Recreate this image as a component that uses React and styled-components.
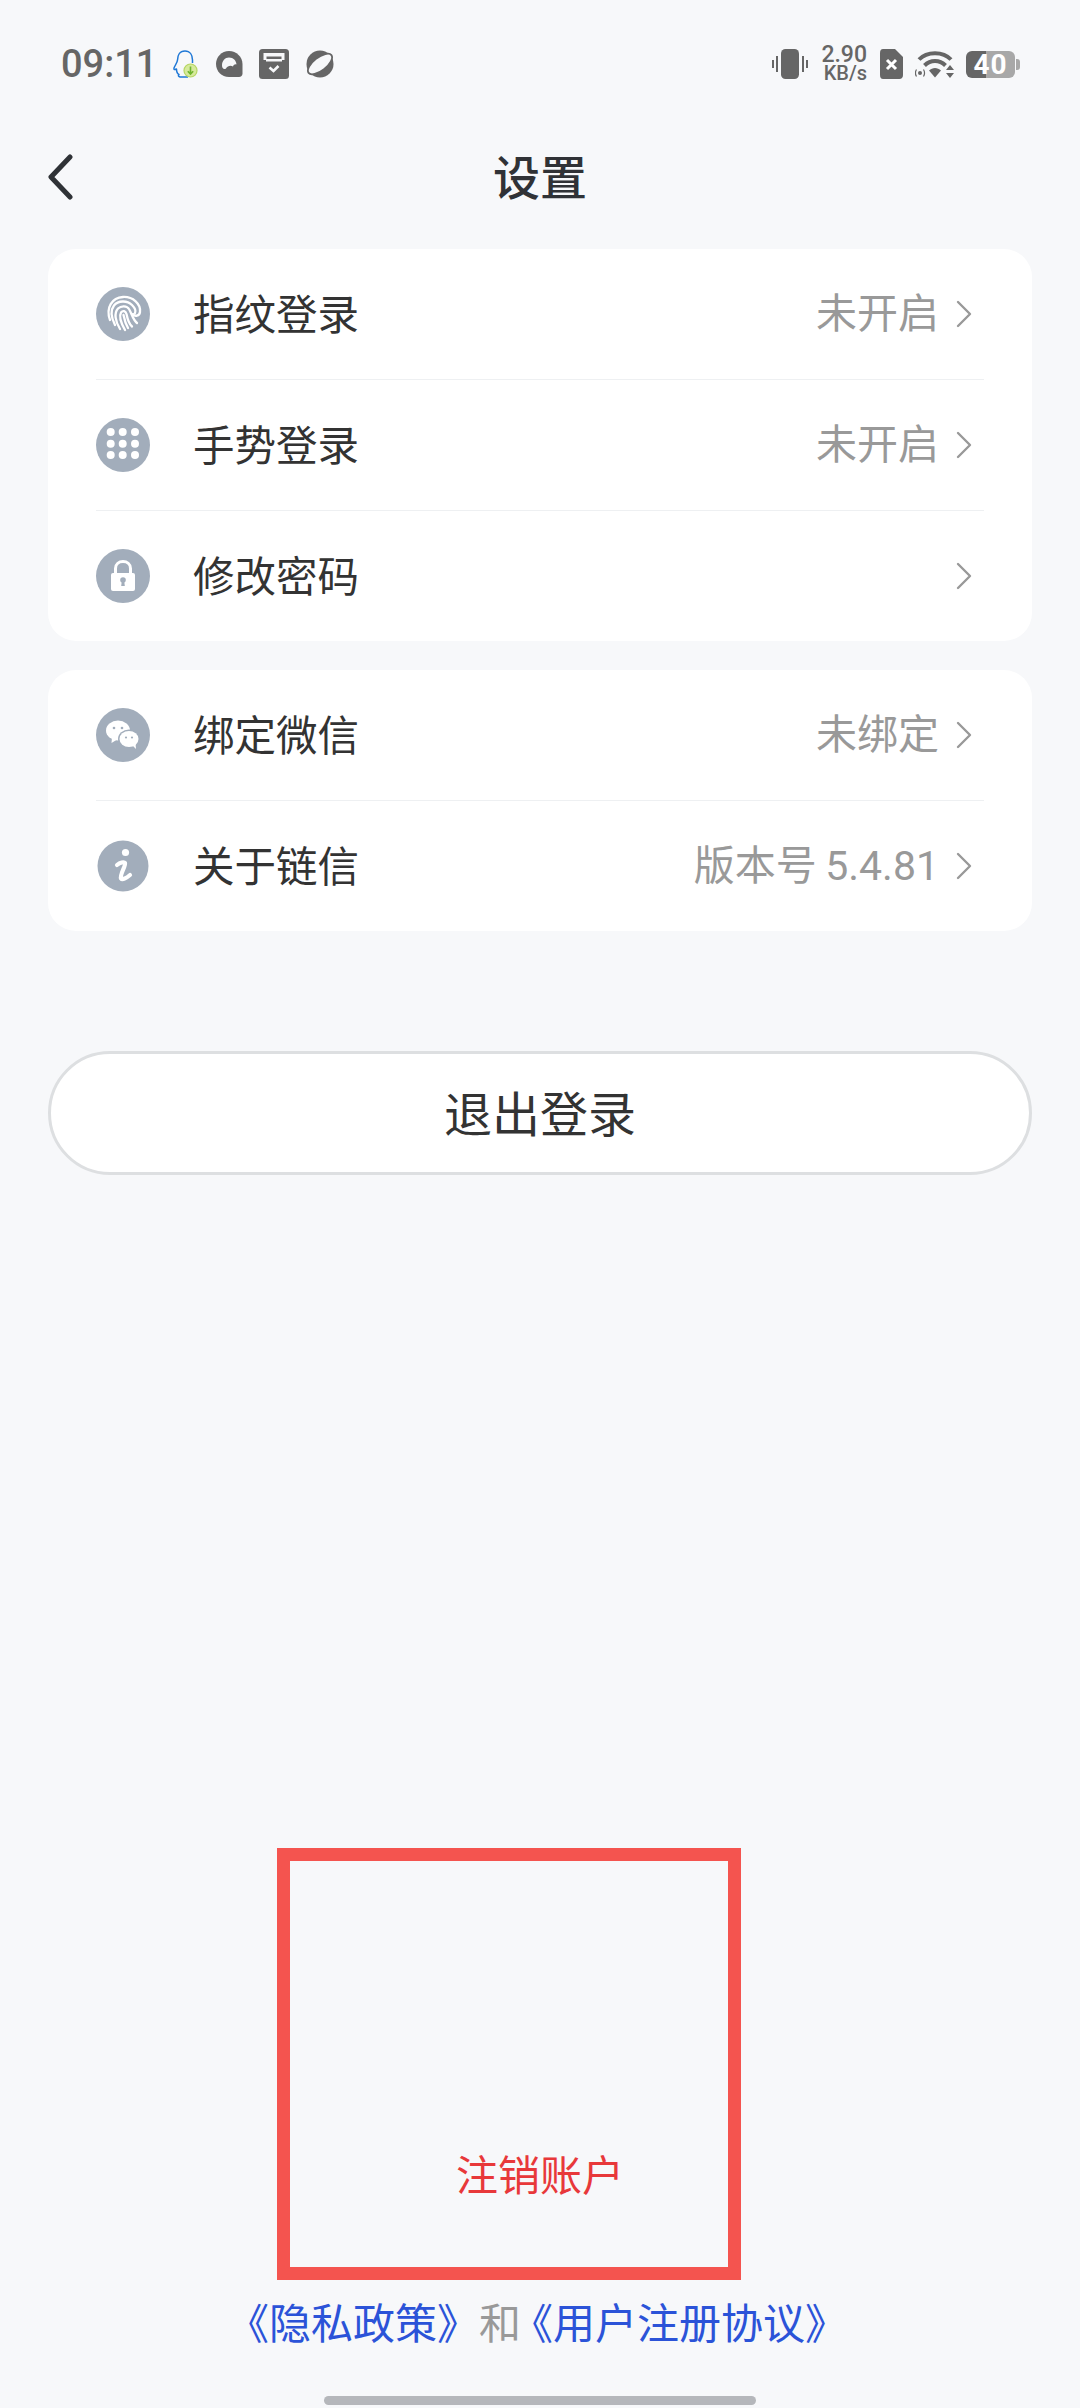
import React from "react";
import styled, { createGlobalStyle } from "styled-components";

const CJK = `"Noto Sans CJK SC", "Noto Sans", sans-serif`;

const GlobalStyle = createGlobalStyle`
  html, body {
    margin: 0;
    padding: 0;
    background: #f7f8fa;
  }
  * {
    box-sizing: border-box;
  }
`;

const Page = styled.div`
  width: 1080px;
  height: 2408px;
  display: flex;
  flex-direction: column;
  background: #f7f8fa;
  font-family: ${CJK};
  overflow: hidden;
`;

const StatusBar = styled.div`
  height: 128px;
  padding: 0 60px 0 61px;
  display: flex;
  align-items: center;
  justify-content: space-between;
  color: #666;
`;

const StatusGroup = styled.div`
  display: flex;
  align-items: center;
  gap: ${({ $gap }) => $gap}px;
`;

const Time = styled.span`
  font-family: Roboto, sans-serif;
  font-size: 38px;
  font-weight: 500;
  width: 93px;
  margin-right: 2px;
  line-height: 1;
  white-space: nowrap;
`;

const Speed = styled.div`
  width: 48px;
  display: flex;
  flex-direction: column;
  align-items: flex-end;
  font-family: Roboto, sans-serif;
  font-weight: 500;
  line-height: 19px;
  white-space: nowrap;
`;

const SpeedValue = styled.span`
  font-size: 23px;
`;

const SpeedUnit = styled.span`
  font-size: 20px;
`;

const Battery = styled.div`
  position: relative;
  width: 49px;
  height: 27px;
  margin-right: 5px;
  border-radius: 6px;
  background: linear-gradient(90deg, #666 0 40%, #a8a8a8 40% 100%);
  color: #fff;
  font-family: Roboto, sans-serif;
  font-size: 28px;
  font-weight: 700;
  letter-spacing: 1px;
  line-height: 27px;
  text-align: center;

  &::after {
    content: "";
    position: absolute;
    right: -5px;
    top: 8px;
    width: 4px;
    height: 11px;
    border-radius: 0 3px 3px 0;
    background: #a8a8a8;
  }
`;

const Header = styled.div`
  position: relative;
  height: 98px;
  padding-bottom: 6px;
  display: flex;
  align-items: center;
  justify-content: center;
`;

const BackButton = styled.div`
  position: absolute;
  left: 47px;
  top: 26px;
  width: 26px;
  height: 46px;
  display: flex;
`;

const Title = styled.h1`
  margin: 0;
  font-size: 47px;
  font-weight: 500;
  color: #303236;
  line-height: 1;
`;

const Card = styled.div`
  margin: ${({ $top }) => $top}px 48px 0;
  padding: 0 48px;
  background: #fff;
  border-radius: 28px;
`;

const Row = styled.div`
  height: ${({ $last }) => ($last ? 130 : 131)}px;
  display: flex;
  align-items: center;
  border-bottom: ${({ $last }) => ($last ? "none" : "1px solid #eef0f2")};
`;

const RowIcon = styled.div`
  width: 54px;
  height: 54px;
  margin-right: 43px;
  display: flex;
`;

const RowLabel = styled.span`
  flex: 1;
  padding-bottom: 2px;
  font-size: 41.5px;
  color: #333;
  line-height: 1;
`;

const RowValue = styled.span`
  font-family: Roboto, ${CJK};
  font-size: 41px;
  color: #999;
  line-height: 1;
`;

const RowChevron = styled.div`
  width: 16px;
  height: 28px;
  margin: 0 12px 0 17px;
  display: flex;
`;

const LogoutButton = styled.div`
  margin: 120px 48px 0;
  height: 124px;
  padding-bottom: 4px;
  display: flex;
  align-items: center;
  justify-content: center;
  background: #fff;
  border: 3px solid #dddfe1;
  border-radius: 62px;
  font-size: 48px;
  color: #333;
`;

const Footer = styled.div`
  position: relative;
  margin-top: auto;
  display: flex;
  flex-direction: column;
  align-items: center;
`;

const CancelAccount = styled.span`
  font-size: 42px;
  line-height: 60px;
  color: #e8383a;
`;

const Highlight = styled.div`
  position: absolute;
  left: 277px;
  bottom: 128px;
  width: 464px;
  height: 432px;
  border: 13px solid #f4544f;
  pointer-events: none;
`;

const Links = styled.div`
  margin: 88px 6px 0 0;
  font-size: 42px;
  line-height: 60px;
  color: #999;
  white-space: nowrap;
`;

const PolicyLink = styled.span`
  color: #2b53d8;
`;

const Conjunction = styled.span`
  letter-spacing: -10px;
`;

const HomeIndicator = styled.div`
  width: 432px;
  height: 9px;
  margin: 45px 0 3px;
  border-radius: 5px;
  background: #b5b7bb;
`;

const Svg = ({ w, h, vb, children }) => (
  <svg width={w} height={h} viewBox={vb || `0 0 ${w} ${h}`} fill="none" style={{ display: "block" }}>
    {children}
  </svg>
);

const QQIcon = () => (
  <Svg w={26} h={30}>
    <path
      d="M13 2C7.500 2 5.500 6.500 5.500 11C5.500 13 3 16.500 2 19C1.500 20.500 2.500 21 4.500 20C4.500 23 6 25 7 25.500C5.500 27 7 28 10 28H16"
      stroke="#1f78d6"
      strokeWidth="1.500"
      strokeLinejoin="round"
    />
    <path d="M13 2C18 2 20.500 6 20.500 11V14" stroke="#1f78d6" strokeWidth="1.500" />
    <circle cx="18.500" cy="21.500" r="6.500" fill="#d6ea9c" stroke="#b6d662" strokeWidth="1.200" />
    <path d="M18.500 17.500V25M15.800 22.200L18.500 25L21.200 22.200" stroke="#6fb52e" strokeWidth="1.600" />
  </Svg>
);

const CloudQIcon = () => (
  <Svg w={29} h={30}>
    <path d="M15 2C7.500 2 2 8 2 15S7.500 28 15 28H25C27 28 28.500 26.500 28.500 24.500V15C28.500 8 22.500 2 15 2Z" fill="#666" />
    <path d="M8 16.500C8 12 11 8.500 15 8.500C19.500 8.500 22 11.500 22.500 15.500C21 15 19.500 16 19 17.500C16.500 16 13.500 17 12 19.500C10 21 8 19.500 8 16.500Z" fill="#f7f8fa" />
  </Svg>
);

const BoxIcon = () => (
  <Svg w={30} h={30}>
    <rect x="0" y="0" width="30" height="30" rx="3.500" fill="#666" />
    <path d="M4.500 4H25.500V11H22.500V7.500H7.500V11H4.500Z" fill="#f7f8fa" />
    <rect x="7" y="10" width="16" height="2.500" fill="#f7f8fa" />
    <path d="M10.500 18.500L14.500 22L19.500 17" stroke="#f7f8fa" strokeWidth="2.600" />
  </Svg>
);

const PlanetIcon = () => (
  <Svg w={30} h={30}>
    <circle cx="15" cy="15" r="13.500" fill="#666" />
    <ellipse cx="15" cy="15" rx="14.500" ry="6.500" transform="rotate(-38 15 15)" fill="#f7f8fa" stroke="#666" strokeWidth="1.800" />
  </Svg>
);

const VibrateIcon = () => (
  <Svg w={36} h={30}>
    <rect x="9" y="0" width="18" height="30" rx="4.500" fill="#666" />
    <path d="M5 7V23M1 11V19M31 7V23M35 11V19" stroke="#666" strokeWidth="2" />
  </Svg>
);

const SimIcon = () => (
  <Svg w={26} h={30}>
    <path d="M5 0H17L25 8V26C25 28.500 23.500 30 21.500 30H5C3 30 2 28.500 2 26V4C2 1.500 3 0 5 0Z" fill="#666" />
    <path d="M9 11L18 20M18 11L9 20" stroke="#fff" strokeWidth="3" />
  </Svg>
);

const WifiIcon = () => (
  <Svg w={40} h={30}>
    <path d="M4 10.500C12 2 28 2 36 10.500" stroke="#666" strokeWidth="4" />
    <path d="M9.500 16.500C15.500 10.500 24.500 10.500 30.500 16.500" stroke="#666" strokeWidth="4" />
    <path d="M14 21.500C17.500 18 22.500 18 26 21.500L20 28.500Z" fill="#666" />
    <circle cx="5" cy="24" r="2" fill="#666" />
    <path d="M1.500 20.500C0 23 0 25 1.500 27.500M8.500 20.500C10 23 10 25 8.500 27.500" stroke="#666" strokeWidth="1.200" />
    <path d="M35 16L39 21H31ZM35 29L31 24H39Z" fill="#666" />
  </Svg>
);

const BackIcon = () => (
  <Svg w={26} h={46}>
    <path d="M23 3L4 23L23 43" stroke="#2f3236" strokeWidth="5" strokeLinecap="round" strokeLinejoin="round" />
  </Svg>
);

const ChevronIcon = () => (
  <Svg w={16} h={28}>
    <path d="M2 2L14 14L2 26" stroke="#999" strokeWidth="2.400" strokeLinecap="round" strokeLinejoin="round" />
  </Svg>
);

const Disc = ({ r = 27, children }) => (
  <Svg w={54} h={54}>
    <circle cx="27" cy="27" r={r} fill="#a2adbb" />
    {children}
  </Svg>
);

const FingerprintIcon = () => (
  <Disc>
    <g stroke="#fff" strokeWidth="2.300" strokeLinecap="round">
      <path d="M14 33C9.500 21 16 10.500 27 10C37 9.500 45 17 44 25C43.500 29 39 30 37 27" />
      <path d="M19 38C15 30 14.500 23 18 18.500C22 13.500 31 13 36 18C39 21 40 24 39 26" />
      <path d="M24 42C19 34 18 26 22 21.500C25 18.500 31 18.500 33 22C35.500 26 37 33 41 36" />
      <path d="M29 43C25 36 22.500 30 25 25.500C27 23 29.500 24 30.500 27C31.500 32 33 37 36 39.500" />
      <path d="M27.500 28C28.500 33 30 37.500 32 41" />
    </g>
  </Disc>
);

const GridIcon = () => (
  <Disc>
    {[14.7, 26.7, 39].map((x) =>
      [14, 25.7, 37].map((y) => <circle key={`${x}-${y}`} cx={x} cy={y} r="4" fill="#fff" />)
    )}
  </Disc>
);

const LockIcon = () => (
  <Disc>
    <path d="M19.500 26V19.500C19.500 15 23 12.500 27 12.500C31 12.500 34.500 15 34.500 19.500V26" stroke="#fff" strokeWidth="3" />
    <rect x="15" y="24" width="24" height="18" rx="2" fill="#fff" />
    <circle cx="27" cy="31" r="2.800" fill="#a2adbb" />
    <path d="M25.800 32H28.200L28.800 37H25.200Z" fill="#a2adbb" />
  </Disc>
);

const WechatIcon = () => (
  <Disc>
    <ellipse cx="22" cy="22.500" rx="12" ry="10" fill="#fff" />
    <path d="M16 29L15.500 35L22 31Z" fill="#fff" />
    <ellipse cx="33" cy="31" rx="11" ry="9.500" fill="#a2adbb" />
    <ellipse cx="33" cy="31" rx="9.500" ry="8" fill="#fff" />
    <path d="M36 37L40 41L39.500 35Z" fill="#fff" />
    <circle cx="18" cy="20" r="1.300" fill="#a2adbb" />
    <circle cx="26" cy="20" r="1.300" fill="#a2adbb" />
    <circle cx="30" cy="29.500" r="1.100" fill="#a2adbb" />
    <circle cx="36" cy="29.500" r="1.100" fill="#a2adbb" />
  </Disc>
);

const InfoIcon = () => (
  <Disc r={25.500}>
    <circle cx="29.500" cy="13.500" r="3.600" fill="#fff" />
    <path
      d="M21 26C24 23.500 28 22.500 29 24C30 26.500 23.500 36 25 39.500C26.500 41.500 31 38.500 34 36"
      stroke="#fff"
      strokeWidth="4.200"
      strokeLinecap="round"
    />
  </Disc>
);

const groups = [
  [
    { label: "指纹登录", value: "未开启", icon: <FingerprintIcon /> },
    { label: "手势登录", value: "未开启", icon: <GridIcon /> },
    { label: "修改密码", icon: <LockIcon /> },
  ],
  [
    { label: "绑定微信", value: "未绑定", icon: <WechatIcon /> },
    { label: "关于链信", value: "版本号\u20095.4.81", icon: <InfoIcon /> },
  ],
];

export default function App() {
  return (
    <Page>
      <GlobalStyle />
      <StatusBar>
        <StatusGroup $gap={16}>
          <Time>09:11</Time>
          <QQIcon />
          <CloudQIcon />
          <BoxIcon />
          <PlanetIcon />
        </StatusGroup>
        <StatusGroup $gap={11}>
          <VibrateIcon />
          <Speed>
            <SpeedValue>2.90</SpeedValue>
            <SpeedUnit>KB/s</SpeedUnit>
          </Speed>
          <SimIcon />
          <WifiIcon />
          <Battery>40</Battery>
        </StatusGroup>
      </StatusBar>

      <Header>
        <BackButton>
          <BackIcon />
        </BackButton>
        <Title>设置</Title>
      </Header>

      {groups.map((rows, i) => (
        <Card key={i} $top={i === 0 ? 23 : 29}>
          {rows.map((row, j) => (
            <Row key={row.label} $last={j === rows.length - 1}>
              <RowIcon>{row.icon}</RowIcon>
              <RowLabel>{row.label}</RowLabel>
              {row.value && <RowValue>{row.value}</RowValue>}
              <RowChevron>
                <ChevronIcon />
              </RowChevron>
            </Row>
          ))}
        </Card>
      ))}

      <LogoutButton>退出登录</LogoutButton>

      <Footer>
        <CancelAccount>注销账户</CancelAccount>
        <Links>
          <PolicyLink>《隐私政策》</PolicyLink>
          <Conjunction>和</Conjunction>
          <PolicyLink>《用户注册协议》</PolicyLink>
        </Links>
        <HomeIndicator />
        <Highlight />
      </Footer>
    </Page>
  );
}
